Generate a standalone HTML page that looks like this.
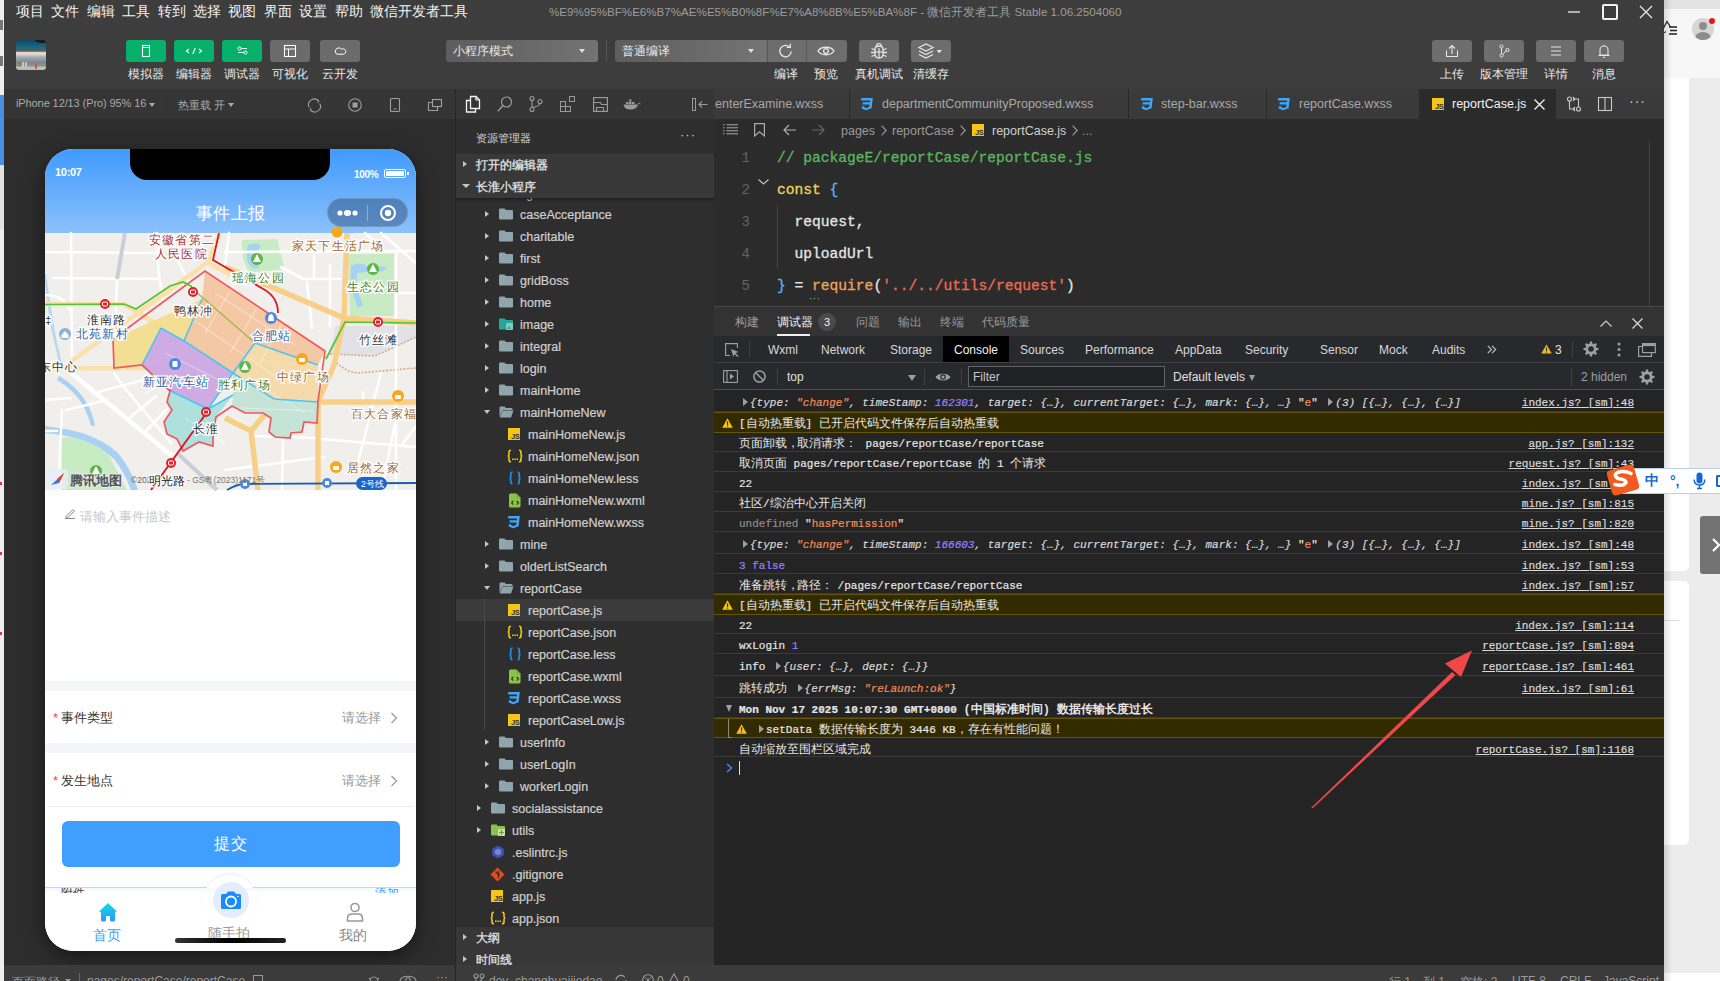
<!DOCTYPE html>
<html><head><meta charset="utf-8">
<style>
*{box-sizing:border-box;margin:0;padding:0}
html,body{width:1720px;height:981px;overflow:hidden;background:#ececec;font-family:"Liberation Sans",sans-serif;}
.a{position:absolute}
.nw{white-space:nowrap}
svg{display:block;overflow:visible}
#win{position:absolute;left:4px;top:0;width:1660px;height:981px;background:#3d3d3d;overflow:hidden}
#menu{position:absolute;left:12px;top:3px;font-size:14px;color:#f2f2f2;white-space:nowrap}
#menu span{margin-right:7.4px}
#title{position:absolute;left:545px;top:5px;font-size:11.6px;color:#9c9c9c;white-space:nowrap}
.tbtn{position:absolute;top:40px;width:40px;height:22px;border-radius:3px;background:#07b06a}
.tbtn.g{background:#6b6b6b}
.tbtn svg{position:absolute;left:0;top:0}
.tlbl{position:absolute;top:66px;font-size:12px;color:#e8e8e8;white-space:nowrap;text-align:center;width:80px;margin-left:-40px}
.dd{position:absolute;top:40px;height:22px;border-radius:3px;background:linear-gradient(90deg,#5d5d5d,#737373);font-size:12px;color:#e8e8e8;line-height:22px;padding-left:7px;white-space:nowrap}
.tri{position:absolute;width:0;height:0;border-left:3.5px solid transparent;border-right:3.5px solid transparent;border-top:4px solid #e0e0e0}
/* sim */
#sim{position:absolute;left:0;top:89px;width:451px;height:876px;background:#2d2d2d;overflow:hidden}
#simbar{position:absolute;left:0;top:0;width:451px;height:30px;background:#353535;font-size:12px;color:#a9a9a9}
#phone{position:absolute;left:41px;top:60px;width:371px;height:802px;border-radius:28px;background:#fff;overflow:hidden;box-shadow:0 6px 20px rgba(0,0,0,.5)}
/* explorer */
#exp{position:absolute;left:451px;top:89px;width:259px;height:876px;background:#2e2e2e;overflow:hidden}
.tr{position:absolute;left:0;width:259px;height:22px}
.tt{position:absolute;top:4.5px;font-size:12.5px;color:#d0d0d0;white-space:nowrap;-webkit-text-stroke:0.2px}
.trr{position:absolute;width:0;height:0;border-top:3.5px solid transparent;border-bottom:3.5px solid transparent;border-left:4px solid #c5c5c5}
.ijs{position:absolute;top:5px;width:12px;height:12px;background:#f5c518}
.ijs span{position:absolute;right:0.5px;bottom:-1px;font-size:7px;font-weight:bold;color:#3a3a3a;letter-spacing:-0.3px}
.ijson{position:absolute;top:3px;font-size:12px;color:#f5c518;letter-spacing:-0.5px;white-space:nowrap}
.iless{position:absolute;top:2px;font-size:13px;color:#1e88e5;letter-spacing:-1px;white-space:nowrap}
#ed{position:absolute;left:710px;top:89px;width:950px;height:876px;background:#2b2b2b;overflow:hidden}
.code{position:absolute;left:0;height:32px;line-height:32px;font-family:"Liberation Mono",monospace;font-size:14.6px;-webkit-text-stroke:0.3px;white-space:pre;color:#e6e6e6;padding-left:63px}
.code .ln{position:absolute;left:24px;width:12px;text-align:right;color:#636363;font-size:14px;-webkit-text-stroke:0}
.ptab{position:absolute;top:226px;font-size:11.5px;white-space:nowrap}
.dtab{position:absolute;top:254px;font-size:12px;color:#d8d8d8;white-space:nowrap}
.crow{position:absolute;left:0;width:950px;border-bottom:1px solid #3a3a3a}
.cw{background:#332b00;border-top:1px solid #665500;border-bottom:1px solid #665500}
.ct{position:absolute;font-family:"Liberation Mono",monospace;font-size:11px;-webkit-text-stroke:0.2px;color:#e6e6e6;white-space:pre;line-height:14px}
.cj{font-size:12px;-webkit-text-stroke:0}
.cp{margin-right:-2px}
.ob{font-style:italic;color:#d8d8d8}
.st{color:#f28b54}
.nu{color:#9980ff}
.ctri{display:inline-block;width:0;height:0;border-top:4px solid transparent;border-bottom:4px solid transparent;border-left:5px solid #9aa0a6;margin:0 2px 0 4px;vertical-align:0px}
.csrc{position:absolute;right:30px;font-family:"Liberation Mono",monospace;font-size:11px;-webkit-text-stroke:0.2px;color:#d8d8d8;text-decoration:underline;white-space:pre;line-height:14px}
#status{position:absolute;left:0;top:965px;width:1660px;height:16px;background:#3b3b3b;overflow:hidden}
</style></head><body>
<div id="win">
  <div id="menu"><span>项目</span><span>文件</span><span>编辑</span><span>工具</span><span>转到</span><span>选择</span><span>视图</span><span>界面</span><span>设置</span><span>帮助</span><span>微信开发者工具</span></div>
  <div id="title">%E9%95%BF%E6%B7%AE%E5%B0%8F%E7%A8%8B%E5%BA%8F - 微信开发者工具 Stable 1.06.2504060</div>
  <!-- window controls -->
  <div class="a" style="left:1564px;top:11px;width:12px;height:2px;background:#b0b0b0"></div>
  <div class="a" style="left:1598px;top:4px;width:16px;height:16px;border:2px solid #f0f0f0;border-radius:2px"></div>
  <svg class="a" style="left:1636px;top:6px" width="12" height="12"><path d="M0 0L12 12M12 0L0 12" stroke="#e8e8e8" stroke-width="1.3"/></svg>
  <!-- avatar -->
  <div class="a" style="left:12px;top:40px;width:30px;height:30px;border-radius:3px;overflow:hidden;background:linear-gradient(180deg,#0f4763 0%,#1d6f8a 30%,#5f5445 34%,#7d6f62 38%,#e6dfd0 42%,#d4d6d8 48%,#a4a9b0 58%,#7f858e 75%,#8d918e 86%,#c2c3bf 92%,#b4b6b2 100%)">
    <div class="a" style="left:19px;top:-3px;width:14px;height:6px;border-radius:50%;background:#1a1a1a"></div>
    <div class="a" style="left:2px;top:22px;width:3px;height:4px;background:#8a7a5a;opacity:.7"></div>
    <div class="a" style="left:6px;top:22px;width:2px;height:5px;background:#e0e0d0;opacity:.7"></div>
    <div class="a" style="left:9px;top:22px;width:2px;height:5px;background:#e0e0d0;opacity:.7"></div>
    <div class="a" style="left:19px;top:24px;width:2px;height:5px;background:#c05040;opacity:.8"></div>
  </div>
  <!-- toolbar buttons -->
  <div class="tbtn" style="left:122px"><svg width="40" height="22"><rect x="16.5" y="5.5" width="7" height="11" fill="none" stroke="#fff" stroke-width="1.1"/><line x1="17" y1="7.5" x2="23" y2="7.5" stroke="#fff" stroke-width="1"/></svg></div>
  <div class="tbtn" style="left:170px"><svg width="40" height="22"><path d="M15 9L12.5 11L15 13M25 9L27.5 11L25 13M21.3 8L18.7 14" fill="none" stroke="#fff" stroke-width="1.1"/></svg></div>
  <div class="tbtn" style="left:218px"><svg width="40" height="22"><line x1="16" y1="8.5" x2="25" y2="8.5" stroke="#fff" stroke-width="1"/><line x1="16" y1="12.5" x2="25" y2="12.5" stroke="#fff" stroke-width="1"/><circle cx="17.5" cy="8.5" r="1.6" fill="#07b06a" stroke="#fff" stroke-width="1"/><circle cx="23.5" cy="12.5" r="1.6" fill="#07b06a" stroke="#fff" stroke-width="1"/></svg></div>
  <div class="tbtn g" style="left:266px"><svg width="40" height="22"><rect x="14.5" y="5.5" width="11" height="11" fill="none" stroke="#fff" stroke-width="1.1"/><line x1="14.5" y1="9" x2="25.5" y2="9" stroke="#fff" stroke-width="1"/><line x1="18.5" y1="9" x2="18.5" y2="16.5" stroke="#fff" stroke-width="1"/></svg></div>
  <div class="tbtn g" style="left:316px"><svg width="40" height="22"><path d="M16 13.5a3.3 3.3 0 1 1 5.5-4.2a2.7 2.7 0 1 1 1.8 4.9H18a2.3 2.3 0 0 1-2-0.7z" fill="none" stroke="#fff" stroke-width="1"/></svg></div>
  <div class="tlbl" style="left:142px">模拟器</div>
  <div class="tlbl" style="left:190px">编辑器</div>
  <div class="tlbl" style="left:238px">调试器</div>
  <div class="tlbl" style="left:286px">可视化</div>
  <div class="tlbl" style="left:336px">云开发</div>
  <!-- mode dropdowns -->
  <div class="dd" style="left:442px;width:152px">小程序模式<div class="tri" style="left:133px;top:9px"></div></div>
  <div class="a" style="left:602px;top:40px;width:1px;height:21px;background:#555"></div>
  <div class="dd" style="left:611px;width:232px;background:linear-gradient(90deg,#5d5d5d,#747474 65%,#6d6d6d 65.2%,#6d6d6d)">普通编译<div class="tri" style="left:133px;top:9px"></div>
    <div class="a" style="left:152px;top:0;width:1px;height:22px;background:#5a5a5a"></div>
    <div class="a" style="left:191px;top:0;width:1px;height:22px;background:#5a5a5a"></div>
    <svg class="a" style="left:163px;top:3px" width="16" height="16"><path d="M13.2 8.5a5.7 5.7 0 1 1-1.9-4.6" fill="none" stroke="#e6e6e6" stroke-width="1.3"/><path d="M12.3 0.8v3.6h-3.6" fill="none" stroke="#e6e6e6" stroke-width="1.3"/></svg>
    <svg class="a" style="left:202px;top:5px" width="18" height="12"><path d="M1 6C4 1 14 1 17 6C14 11 4 11 1 6z" fill="none" stroke="#e6e6e6" stroke-width="1.3"/><circle cx="9" cy="6" r="2.4" fill="none" stroke="#e6e6e6" stroke-width="1.3"/></svg>
  </div>
  <div class="tbtn g" style="left:855px;background:#6d6d6d"><svg width="40" height="22"><path d="M16 9.5Q16 6 20 6Q24 6 24 9.5V14Q24 18 20 18Q16 18 16 14z" fill="none" stroke="#e6e6e6" stroke-width="1.3"/><path d="M17.5 6.5Q17.5 3.5 20 3.5Q22.5 3.5 22.5 6.5M20 8V18M16 12H24" fill="none" stroke="#e6e6e6" stroke-width="1.2"/><path d="M12.5 8.5L16 10M27.5 8.5L24 10M12 12.5H16M28 12.5H24M12.5 16.5L16 15M27.5 16.5L24 15" fill="none" stroke="#e6e6e6" stroke-width="1.3"/></svg></div>
  <div class="tbtn g" style="left:907px;background:#6d6d6d"><svg width="40" height="22"><path d="M8 7.5l7-3.5l7 3.5l-7 3.5z" fill="none" stroke="#e6e6e6" stroke-width="1.2"/><path d="M8 11l7 3.5l7-3.5M8 14.5l7 3.5l7-3.5" fill="none" stroke="#e6e6e6" stroke-width="1.2"/><path d="M25.5 10h5.5l-2.75 3.2z" fill="#e6e6e6"/></svg></div>
  <div class="tlbl" style="left:782px">编译</div>
  <div class="tlbl" style="left:822px">预览</div>
  <div class="tlbl" style="left:875px">真机调试</div>
  <div class="tlbl" style="left:927px">清缓存</div>
  <!-- right toolbar -->
  <div class="tbtn g" style="left:1428px;background:#6d6d6d"><svg width="40" height="22"><path d="M14.5 10.5v6h11v-6M20 14V5.5M17 8.5l3-3l3 3" fill="none" stroke="#e6e6e6" stroke-width="1.1"/></svg></div>
  <div class="tbtn g" style="left:1480px;background:#6d6d6d"><svg width="40" height="22"><circle cx="17.5" cy="6.5" r="1.6" fill="none" stroke="#e6e6e6" stroke-width="1"/><circle cx="17.5" cy="15.5" r="1.6" fill="none" stroke="#e6e6e6" stroke-width="1"/><circle cx="23.5" cy="10" r="1.6" fill="none" stroke="#e6e6e6" stroke-width="1"/><path d="M17.5 8.1v5.8M22.1 10.8l-3.3 3.6" fill="none" stroke="#e6e6e6" stroke-width="1"/></svg></div>
  <div class="tbtn g" style="left:1532px;background:#6d6d6d"><svg width="40" height="22"><path d="M15 7h10M15 11h10M15 15h10" stroke="#e6e6e6" stroke-width="1.1"/></svg></div>
  <div class="tbtn g" style="left:1580px;background:#6d6d6d"><svg width="40" height="22"><path d="M16 15V10a4 4 0 0 1 8 0v5zM14.5 15.5h11M19 17.2h2M20 4.8v1.2" fill="none" stroke="#e6e6e6" stroke-width="1.1"/></svg></div>
  <div class="tlbl" style="left:1448px">上传</div>
  <div class="tlbl" style="left:1500px">版本管理</div>
  <div class="tlbl" style="left:1552px">详情</div>
  <div class="tlbl" style="left:1600px">消息</div>

  <!-- SIM -->
  <div id="sim">
    <div id="simbar">
      <div class="a nw" style="left:12px;top:8px;font-size:11px;letter-spacing:-0.1px">iPhone 12/13 (Pro) 95% 16</div>
      <div class="tri" style="left:145px;top:14px;border-top-color:#a9a9a9"></div>
      <div class="a" style="left:162px;top:0;width:1px;height:30px;background:#333"></div>
      <div class="a nw" style="left:174px;top:8.5px;font-size:11.4px">热重载 开</div>
      <div class="tri" style="left:224px;top:14px;border-top-color:#a9a9a9"></div>
      <div class="a" style="left:241px;top:0;width:1px;height:30px;background:#333"></div>
      <svg class="a" style="left:303px;top:9px" width="15" height="15"><path d="M2.2 9.5A5.8 5.8 0 0 1 11.5 2.8" fill="none" stroke="#a0a0a0" stroke-width="1.1"/><path d="M12.8 5.5A5.8 5.8 0 0 1 3.5 12.2" fill="none" stroke="#a0a0a0" stroke-width="1.1"/><path d="M9.8 1.5L12 2.9L10.8 5" fill="none" stroke="#a0a0a0" stroke-width="1"/><path d="M5.2 13.5L3 12.1L4.2 10" fill="none" stroke="#a0a0a0" stroke-width="1"/></svg>
      <svg class="a" style="left:344px;top:9px" width="14" height="14"><circle cx="7" cy="7" r="6.3" fill="none" stroke="#a0a0a0" stroke-width="1.1"/><rect x="4.5" y="4.5" width="5" height="5" fill="#a0a0a0"/></svg>
      <svg class="a" style="left:386px;top:9px" width="10" height="14"><rect x="0.5" y="0.5" width="9" height="13" rx="1" fill="none" stroke="#a0a0a0" stroke-width="1.1"/><line x1="3.5" y1="11" x2="6.5" y2="11" stroke="#a0a0a0"/></svg>
      <svg class="a" style="left:424px;top:10px" width="14" height="12"><rect x="4.5" y="0.5" width="9" height="7" fill="none" stroke="#a0a0a0" stroke-width="1.1"/><path d="M4.5 3.5H0.5v8h9v-4" fill="none" stroke="#a0a0a0" stroke-width="1.1"/></svg>
    </div>
    <div id="phone">
      <div class="a" style="left:0;top:0;width:371px;height:84px;background:linear-gradient(180deg,#3f9bff 0%,#62abfb 45%,#8cc1fb 100%)"></div>
      <div class="a" style="left:85px;top:0;width:200px;height:31px;background:#000;border-radius:0 0 17px 17px"></div>
      <div class="a nw" style="left:10px;top:17px;font-size:11px;font-weight:bold;color:#fff;letter-spacing:-0.3px">10:07</div>
      <div class="a nw" style="left:309px;top:19.5px;font-size:10px;font-weight:bold;color:#fff;letter-spacing:-0.3px">100%</div>
      <div class="a" style="left:339px;top:20px;width:22px;height:9px;border:1px solid #fff;border-radius:2px;padding:1px"><div style="width:100%;height:100%;background:#fff;border-radius:1px"></div></div>
      <div class="a" style="left:362px;top:23px;width:1.5px;height:3px;background:#fff"></div>
      <div class="a nw" style="left:151px;top:53px;font-size:17px;color:#fff;letter-spacing:0.3px">事件上报</div>
      <div class="a" style="left:282px;top:49px;width:81px;height:29px;border-radius:15px;background:rgba(40,70,110,.45);border:1px solid rgba(255,255,255,.15)"></div>
      <div class="a" style="left:322px;top:56px;width:1px;height:16px;background:rgba(255,255,255,.35)"></div>
      <svg class="a" style="left:290px;top:58px" width="26" height="12"><circle cx="5" cy="6" r="2.6" fill="#fff"/><ellipse cx="12.5" cy="6" rx="3.6" ry="3" fill="#fff"/><circle cx="20" cy="6" r="2.6" fill="#fff"/></svg>
      <svg class="a" style="left:334px;top:55px" width="18" height="18"><circle cx="9" cy="9" r="7" fill="none" stroke="#fff" stroke-width="2"/><circle cx="9" cy="9" r="3.2" fill="#fff"/></svg>
      <!-- MAP -->
      <svg class="a" style="left:0;top:84px" width="371" height="257" viewBox="0 0 371 257">
        <rect width="371" height="257" fill="#f1efeb"/>
        <!-- parks -->
        <path d="M197 7 L232 6 L240 36 L205 40 Q196 30 197 7z" fill="#c9ebc4"/>
        <path d="M203 12 Q214 8 216 14 Q210 20 212 28 Q218 34 210 36 Q198 32 203 12z" fill="#a6d3f3"/>
        <path d="M303 21 L349 21 L349 83 L305 83z" fill="#c9ebc4"/>
        <path d="M306 33 Q315 28 322 33 L342 34 Q340 40 330 38 L312 40 Q310 55 318 72 L313 75 Q304 56 306 33z" fill="#a6d3f3"/>
        <path d="M17 205 Q40 200 60 215 L82 257 L17 257z" fill="#c9ebc4"/>
        <!-- gray railway area -->
        <path d="M290 93 L371 93 L371 105 L330 123 L285 121z" fill="#e2e2e6"/>
        <path d="M285 121 L330 123 L371 104" fill="none" stroke="#dba98a" stroke-width="1.6" stroke-dasharray="2 1.5"/>
        <path d="M289 127 Q300 139 313 140 L371 135" fill="none" stroke="#dba98a" stroke-width="1.6" stroke-dasharray="2 1.5"/>
        <!-- rivers -->
        <path d="M0 193 Q25 196 40 201 Q60 208 73 220 Q86 236 93 257 L86 257 Q79 238 68 225 Q55 213 38 207 Q22 202 0 200z" fill="#a9d1f3"/>
        <path d="M14 143 Q30 152 40 167 Q48 180 50 193 L46 193 Q43 181 36 169 Q27 156 12 147z" fill="#a9d1f3"/>
        <path d="M1 40 Q8 90 12 110 Q16 125 17 132 L14 132 Q12 120 9 108 Q4 90 -1 42z" fill="#b9d9f3"/>
        <!-- minor white roads -->
        <g stroke="#ffffff" stroke-width="2.6" fill="none" stroke-linecap="round">
          <path d="M0 19 L110 20"/><path d="M180 19 L371 18"/><path d="M8 45 L112 46"/>
          <path d="M26 0 L27 131"/><path d="M72 45 L69 131"/><path d="M112 0 Q112 40 118 66"/>
          <path d="M132 26 L146 53"/><path d="M184 0 L180 32"/><path d="M236 34 L258 46 L295 46"/>
          <path d="M269 20 L269 46"/><path d="M285 32 L285 93"/><path d="M262 50 L267 95"/>
          <path d="M351 21 L351 257"/><path d="M351 60 L371 60"/><path d="M0 62 Q20 62 26 80"/>
          <path d="M26 140 L126 222" stroke-width="4.5"/>
          <path d="M69 140 L78 153 L126 210"/><path d="M53 159 L106 145"/><path d="M21 177 L62 167"/>
          <path d="M0 167 L26 165"/><path d="M17 177 L13 257"/><path d="M82 187 L111 163"/>
          <path d="M99 200 L122 176"/><path d="M0 198 L12 198"/>
          <path d="M209 203 L270 205"/><path d="M277 206 L371 214"/><path d="M312 233 L336 140"/>
          <path d="M339 246 L352 180"/><path d="M356 213 L371 193"/><path d="M238 205 L237 257"/>
          <path d="M180 237 L279 224"/><path d="M318 159 L318 166"/><path d="M210 128 L273 132"/>
          <path d="M336 0 L371 30"/><path d="M320 0 L335 14"/>
        </g>
        <!-- roads inside districts (pale) -->
        <g stroke="#ffffff" stroke-opacity=".45" stroke-width="1.5" fill="none">
          <path d="M170 60 L250 112"/><path d="M150 88 L240 150"/><path d="M190 50 L160 100"/><path d="M215 70 L185 120"/>
          <path d="M240 85 L215 130"/><path d="M120 120 L180 150"/><path d="M140 185 L180 210"/><path d="M210 150 L260 180"/>
          <path d="M90 110 L68 132"/><path d="M100 160 L160 130"/>
        </g>
        <!-- grey railway line -->
        <path d="M132 220 L172 257" stroke="#c9ced8" stroke-width="4" fill="none"/>
        <path d="M80 0 L72 46" stroke="#c9ced8" stroke-width="4" fill="none"/>
        <!-- major yellow roads -->
        <g stroke="#f7cf87" stroke-width="5.5" fill="none" stroke-linejoin="round">
          <path d="M180 34 L299 85 L371 90"/>
          <path d="M302 0 L299 85 L289 132 L273 169 L273 257"/>
          <path d="M273 169 L371 169"/>
          <path d="M180 185 L206 198 L213 257"/><path d="M206 198 L221 180"/>
        </g>
        <g stroke="#fbe1a9" stroke-width="4.5" fill="none" stroke-linejoin="round">
          <path d="M0 135.5 L115 135 L126 140 L160 182"/>
          <path d="M24 130 L163 29 L175 0"/>
          <path d="M0 71 L79 71 L115 93"/>
          <path d="M164 30 L200 50"/>
        </g>
        <!-- districts -->
        <g opacity=".92">
        <path d="M68 106 L157 66 L139 108 L116 95 L97 132 L69 135z" fill="#f4dd8c"/>
        <path d="M160 38 L280 118 L273 132 L210 110 L188 140 L139 108 L157 66z" fill="#f6c5a0"/>
        <path d="M210 110 L273 132 L273 169 L229 166 L188 140z" fill="#f6d9a6"/>
        <path d="M116 95 L139 108 L188 140 L163 176 L124 157 L97 132z" fill="#cca6e3"/>
        <path d="M124 157 L126 155 L123 165 L122 169 L127 177 L119 189 L122 201 L132 206 L138 218 L154 209 L168 213 L168 201 L171 184 L188 162 L163 176z" fill="#a9e0dd"/>
        <path d="M188 140 L229 166 L273 169 L272 190 L259 189 L257 199 L246 200 L245 205 L230 204 L224 199 L226 185 L218 180 L200 180 L187 173 L188 162z" fill="#c2e3d6"/>
        </g>
        <g stroke="#ffffff" stroke-opacity=".35" stroke-width="1.3" fill="none">
          <path d="M170 60 L250 112"/><path d="M150 88 L240 150"/><path d="M190 50 L160 100"/><path d="M215 70 L185 120"/>
          <path d="M240 85 L215 130"/><path d="M120 120 L180 150"/><path d="M140 185 L180 210"/><path d="M210 150 L260 180"/>
          <path d="M195 175 L270 178"/>
        </g>
        <g stroke="#4ac6f0" stroke-width="1.6" fill="none">
          <path d="M157 66 L139 108 L188 140 L229 166 L273 169"/>
          <path d="M210 110 L188 140 L163 176"/>
          <path d="M116 95 L139 108"/><path d="M116 95 L97 132 L124 157 L163 176 L188 162"/>
          <path d="M210 110 L273 132"/>
        </g>
        <path d="M68 106 L160 38 L280 118 L273 168 L272 190 L259 189 L257 199 L246 200 L245 205 L230 204 L224 199 L226 185 L218 180 L200 180 L187 173 L171 184 L168 201 L168 213 L154 209 L138 218 L132 206 L122 201 L119 189 L127 177 L122 169 L123 165 L126 155 L124 157 L97 132 L69 135z" fill="none" stroke="#ee5a5e" stroke-width="1.7"/>
        <!-- subway lines -->
        <path d="M0 71.5 L79 71 L91 76 L125 53 L138 49 L146 53 L149 58" fill="none" stroke="#52c535" stroke-width="1.7"/>
        <path d="M150 58 L210 110" fill="none" stroke="#9db848" stroke-width="1.3"/>
        <path d="M281 126 L300 89 L371 90" fill="none" stroke="#52c535" stroke-width="1.7"/>
        <path d="M174 0 L168 27 L220 57 Q233 65 233 80" fill="none" stroke="#d21d2a" stroke-width="1.8"/>
        <path d="M160 182 L106 257" fill="none" stroke="#d21d2a" stroke-width="2"/>
        <path d="M182 257 Q192 251 200 251 L371 250" fill="none" stroke="#1a5cb3" stroke-width="1.8"/>
        <!-- station icons -->
        <g fill="#d8242e"><circle cx="60" cy="71" r="5"/><circle cx="148" cy="59" r="5"/><circle cx="333" cy="89" r="5"/><circle cx="161" cy="179" r="5"/><circle cx="126" cy="230" r="5"/></g>
        <g fill="none" stroke="#fff" stroke-width="1"><rect x="57.5" y="69" width="5" height="4" rx="1"/><rect x="145.5" y="57" width="5" height="4" rx="1"/><rect x="330.5" y="87" width="5" height="4" rx="1"/><rect x="158.5" y="177" width="5" height="4" rx="1"/><rect x="123.5" y="228" width="5" height="4" rx="1"/></g>
        <g fill="#4a88e6"><circle cx="226" cy="85" r="6"/><circle cx="130" cy="131" r="6"/><circle cx="20" cy="101" r="6" fill="#8db0da"/><circle cx="200" cy="251" r="5"/><circle cx="282" cy="250" r="5"/></g>
        <g fill="#fff"><path d="M223 88 Q223 81 226 81 Q229 81 229 88z"/><rect x="127.5" y="128" width="5" height="6" rx="1"/><path d="M16.5 102 L20 98 L23.5 102 V105 H16.5z"/><rect x="198" y="249" width="4" height="4"/><rect x="280" y="248" width="4" height="4"/></g>
        <g fill="#5bb54a"><circle cx="212" cy="26" r="6"/><circle cx="328" cy="36" r="6"/><circle cx="200" cy="134" r="6"/><circle cx="51" cy="238" r="6"/></g>
        <g fill="#fff"><path d="M212 21 L216 29 H208z"/><path d="M328 31 L332 39 H324z"/><path d="M200 129 L204 137 H196z"/><path d="M51 233 L55 241 H47z"/></g>
        <g fill="#f5a81c"><circle cx="257" cy="126" r="6"/><circle cx="353" cy="163" r="6"/><circle cx="291" cy="234" r="6"/><circle cx="292" cy="-1" r="5.5"/></g>
        <g fill="#fff"><rect x="254" y="125" width="6" height="4" rx="1"/><rect x="350" y="162" width="6" height="4" rx="1"/><rect x="288" y="233" width="6" height="4" rx="1"/></g>
        <!-- labels -->
        <g font-family="Liberation Sans,sans-serif" font-size="11.5" stroke="#fff" stroke-width="2.6" paint-order="stroke" letter-spacing="1.2" font-weight="bold">
          <text x="104" y="11" fill="#a8333a" font-weight="normal">安徽省第二</text>
          <text x="110" y="25" fill="#a8333a" font-weight="normal">人民医院</text>
          <text x="247" y="17" fill="#9c6a2e" font-weight="normal">家天下生活广场</text>
          <text x="187" y="49" fill="#3f7f2d" font-weight="normal">瑶海公园</text>
          <text x="302" y="58" fill="#3f7f2d" font-weight="normal">生态公园</text>
          <text x="129" y="82" fill="#333" font-weight="normal">鸭林冲</text>
          <text x="42" y="91" fill="#333" font-weight="normal">淮南路</text>
          <text x="31" y="105" fill="#2d62a8" font-weight="normal">北苑新村</text>
          <text x="207" y="107" fill="#2d62a8" font-weight="normal">合肥站</text>
          <text x="314" y="111" fill="#333" font-weight="normal">竹丝滩</text>
          <text x="-6" y="138" fill="#333" font-weight="normal">东中心</text>
          <text x="0" y="91" fill="#333" font-weight="normal">‡</text>
          <text x="98" y="153" fill="#2d62a8" font-weight="normal">新亚汽车站</text>
          <text x="173" y="156" fill="#3f7f2d" font-weight="normal">胜利广场</text>
          <text x="232" y="148" fill="#9c6a2e" font-weight="normal">中绿广场</text>
          <text x="306" y="185" fill="#9c6a2e" font-weight="normal">百大合家福</text>
          <text x="148" y="200" fill="#333" font-weight="normal">长淮</text>
          <text x="302" y="239" fill="#9c6a2e" font-weight="normal">居然之家</text>
        </g>
        <g font-family="Liberation Sans,sans-serif">
          <rect x="3" y="236" width="20" height="20" rx="3" fill="#e6edf7" opacity=".85"/>
          <path d="M6 252 L19 240 L14 250z" fill="#2f7de0"/><path d="M19 240 L14 250 L12 246z" fill="#e8412c"/>
          <text x="25" y="252" font-size="13" font-weight="bold" fill="#555" stroke="#e8e8e8" stroke-width="2" paint-order="stroke">腾讯地图</text>
          <text x="86" y="250" font-size="8.5" fill="#666">©2023</text>
          <text x="104" y="252" font-size="12" fill="#222" stroke="#fff" stroke-width="2" paint-order="stroke">明光路</text>
          <text x="142" y="250" font-size="8.5" fill="#777">- GS粤(2023)1171号</text>
          <rect x="311" y="244" width="31" height="13" rx="6.5" fill="#1766c9"/>
          <text x="316" y="254" font-size="8.5" fill="#fff">2号线</text>
        </g>
      </svg>
      <!-- form -->
      <svg class="a" style="left:19px;top:358px" width="12" height="12"><path d="M2 9.5L9 2.5L10.5 4L3.5 11H2z" fill="none" stroke="#888" stroke-width="1"/><line x1="1" y1="11.5" x2="11" y2="11.5" stroke="#888" stroke-width="1"/></svg>
      <div class="a nw" style="left:35px;top:359px;font-size:13px;color:#c8c8c8">请输入事件描述</div>
      <div class="a" style="left:0;top:532px;width:371px;height:10px;background:#f4f5f8"></div>
      <div class="a nw" style="left:8px;top:561px;font-size:13px;color:#f5414e">*</div>
      <div class="a nw" style="left:16px;top:560px;font-size:13px;color:#333">事件类型</div>
      <div class="a nw" style="left:297px;top:560px;font-size:13px;color:#999">请选择</div>
      <svg class="a" style="left:345px;top:563px" width="8" height="12"><path d="M1.5 1L6.5 6L1.5 11" fill="none" stroke="#999" stroke-width="1.2"/></svg>
      <div class="a" style="left:0;top:594px;width:371px;height:10px;background:#f4f5f8"></div>
      <div class="a nw" style="left:8px;top:624px;font-size:13px;color:#f5414e">*</div>
      <div class="a nw" style="left:16px;top:623px;font-size:13px;color:#333">发生地点</div>
      <div class="a nw" style="left:297px;top:623px;font-size:13px;color:#999">请选择</div>
      <svg class="a" style="left:345px;top:626px" width="8" height="12"><path d="M1.5 1L6.5 6L1.5 11" fill="none" stroke="#999" stroke-width="1.2"/></svg>
      <div class="a" style="left:2px;top:657px;width:367px;height:1px;background:#eee"></div>
      <div class="a" style="left:17px;top:672px;width:338px;height:46px;border-radius:6px;background:#409eff;color:#fff;font-size:16px;text-align:center;line-height:46px;letter-spacing:1px">提交</div>
      
      
      <!-- tab bar -->
      <div class="a" style="left:0;top:738px;width:371px;height:64px;background:#fff;border-top:1px solid #bcdaf8"></div>
      <div class="a" style="left:157px;top:726px;width:56px;height:56px;border-radius:50%;background:#fff;box-shadow:0 -2px 3px rgba(0,0,0,.05)"></div>
      <div class="a" style="left:0;top:739px;width:371px;height:6px;background:linear-gradient(#f6f8fa,#fff)"></div>
      <div class="a" style="left:168px;top:733px;width:36px;height:36px;border-radius:50%;background:#e3edfd"></div>
      <svg class="a" style="left:175px;top:741px" width="22" height="20"><path d="M1 5.5Q1 4 2.5 4H6L8 1.5H14L16 4H19.5Q21 4 21 5.5V17.5Q21 19 19.5 19H2.5Q1 19 1 17.5z" fill="#1a8bff"/><circle cx="11" cy="11.5" r="5" fill="none" stroke="#fff" stroke-width="1.8"/><circle cx="18" cy="6.5" r="0.8" fill="#fff"/></svg>
      <svg class="a" style="left:53px;top:753px" width="20" height="20"><defs><linearGradient id="hg" x1="0" y1="0" x2="0" y2="1"><stop offset="0" stop-color="#12dbe6"/><stop offset="1" stop-color="#2e96f7"/></linearGradient></defs><path d="M10 1L19 9.5L17 10V18Q17 19.5 15.5 19.5H13.5Q12 19.5 12 18V14H8V18Q8 19.5 6.5 19.5H4.5Q3 19.5 3 18V10L1 9.5z" fill="url(#hg)"/></svg>
      <div class="a nw" style="left:48px;top:778px;font-size:14px;color:#4a9ff5">首页</div>
      <div class="a nw" style="left:163px;top:776px;font-size:14px;color:#999;height:14px;overflow:hidden">随手拍</div>
      <svg class="a" style="left:301px;top:753px" width="18" height="20"><circle cx="9" cy="5.5" r="4" fill="none" stroke="#999" stroke-width="1.6"/><path d="M1.5 19V16.5Q1.5 12 6 12H12Q16.5 12 16.5 16.5V19z" fill="none" stroke="#999" stroke-width="1.6"/></svg>
      <div class="a nw" style="left:294px;top:778px;font-size:14px;color:#888">我的</div>
      <div class="a" style="left:16px;top:739px;width:40px;height:5px;overflow:hidden"><div class="nw" style="margin-top:-3px;font-size:12px;color:#444">附件</div></div>
      <div class="a" style="left:330px;top:739px;width:40px;height:5px;overflow:hidden"><div class="nw" style="margin-top:-3px;font-size:12px;color:#409eff">添加</div></div>
      <div class="a" style="left:130px;top:789px;width:111px;height:5px;border-radius:3px;background:linear-gradient(90deg,#333,#000 50%,#222)"></div>
    </div>
  </div>
  <div class="a" style="left:451px;top:89px;width:1px;height:892px;background:#262626;z-index:5"></div>
  <div id="exp">
    <div class="a" style="left:0;top:0;width:259px;height:30px;background:#353535"></div>
    <!-- activity icons (page x - 455) -->
    <svg class="a" style="left:10px;top:7px" width="16" height="17"><path d="M5.5 0.5H11L14.5 4V12.5H5.5z" fill="none" stroke="#f4f4f4" stroke-width="1.3"/><path d="M11 0.5V4H14.5" fill="none" stroke="#f4f4f4" stroke-width="1.2"/><path d="M5.5 4.5H1.5V16H10.5V12.5" fill="none" stroke="#f4f4f4" stroke-width="1.3"/></svg>
    <svg class="a" style="left:42px;top:7px" width="16" height="16"><circle cx="9.5" cy="6" r="5" fill="none" stroke="#9a9a9a" stroke-width="1.2"/><path d="M6 9.5L0.8 15.2" stroke="#9a9a9a" stroke-width="1.3"/></svg>
    <svg class="a" style="left:74px;top:7px" width="14" height="16"><circle cx="3" cy="2.5" r="2" fill="none" stroke="#9a9a9a" stroke-width="1.1"/><circle cx="3" cy="13.5" r="2" fill="none" stroke="#9a9a9a" stroke-width="1.1"/><circle cx="11" cy="5.5" r="2" fill="none" stroke="#9a9a9a" stroke-width="1.1"/><path d="M3 4.5V11.5M11 7.5Q11 10 3 11.5" fill="none" stroke="#9a9a9a" stroke-width="1.1"/></svg>
    <svg class="a" style="left:105px;top:7px" width="16" height="16"><rect x="0.5" y="5.5" width="5" height="5" fill="none" stroke="#9a9a9a"/><rect x="5.5" y="10.5" width="5" height="5" fill="none" stroke="#9a9a9a"/><rect x="0.5" y="10.5" width="5" height="5" fill="none" stroke="#9a9a9a"/><rect x="9.5" y="0.5" width="5" height="5" fill="none" stroke="#9a9a9a"/></svg>
    <svg class="a" style="left:138px;top:8px" width="15" height="15"><rect x="0.6" y="0.6" width="13.8" height="13.8" fill="none" stroke="#9a9a9a" stroke-width="1.2"/><path d="M0.6 5.5H7.5L8.5 7.5H14.4M3.5 14V10.5H10.5V14" fill="none" stroke="#9a9a9a" stroke-width="1.1"/></svg>
    <svg class="a" style="left:168px;top:9px" width="18" height="12"><path d="M0.5 6.5H15Q14 11.5 7 11.5Q1.5 11.5 0.5 6.5z" fill="#9a9a9a"/><rect x="3" y="4" width="2.5" height="2" fill="#9a9a9a"/><rect x="6" y="4" width="2.5" height="2" fill="#9a9a9a"/><rect x="9" y="4" width="2.5" height="2" fill="#9a9a9a"/><rect x="6" y="1.5" width="2.5" height="2" fill="#9a9a9a"/><path d="M15 6Q16.5 4.5 17.5 6" stroke="#9a9a9a" fill="none"/></svg>
    <svg class="a" style="left:237px;top:9px" width="16" height="13"><rect x="0.5" y="0.5" width="3" height="12" fill="none" stroke="#9a9a9a"/><path d="M15.5 6.5H7M10 3.5L7 6.5L10 9.5" fill="none" stroke="#9a9a9a" stroke-width="1.1"/></svg>
    <div class="a" style="left:0;top:30px;width:259px;height:846px;background:#2e2e2e"></div>
    <div class="a nw" style="left:21px;top:41.5px;font-size:11px;color:#d4d4d4">资源管理器</div>
    <div class="a nw" style="left:225px;top:38px;font-size:13px;color:#d0d0d0;letter-spacing:1px">···</div>
    <div class="a" style="left:0;top:65px;width:259px;height:44px;background:#383838"></div>
    <div class="trr" style="left:8px;top:72px;border-left-color:#c5c5c5"></div>
    <div class="a nw" style="left:21px;top:69px;font-size:11.5px;font-weight:bold;color:#d4d4d4">打开的编辑器</div>
    <div class="tri" style="left:7px;top:95px;border-top-color:#c5c5c5;border-left-width:4px;border-right-width:4px;border-top-width:4.5px"></div>
    <div class="a nw" style="left:21px;top:91px;font-size:11.5px;font-weight:bold;color:#d4d4d4">长淮小程序</div>
    <div class="a" style="left:71px;top:109px;width:9px;height:3px;overflow:hidden"><div class="nw" style="margin-top:-11px;font-size:12.5px;color:#c8c8c8">g</div></div>
    <div class="a" style="left:0;top:109px;width:259px;height:4px;background:linear-gradient(rgba(0,0,0,.35),rgba(0,0,0,0))"></div>
    <div class="a" style="left:0;top:510px;width:259px;height:22px;background:#3b3b3b"></div>
    <div class="a" style="left:29px;top:510px;width:1px;height:132px;background:#4a4a4a"></div>
<div class="tr" style="top:114px"><div class="trr" style="left:30px;top:7.5px"></div><svg class="a" style="left:44px;top:5px" width="15" height="12"><path d="M0 1.5Q0 0.5 1 0.5H5.5L7 2H13Q14 2 14 3V10.5Q14 11.5 13 11.5H1Q0 11.5 0 10.5z" fill="#90a4ae"/></svg><div class="tt" style="left:65px">caseAcceptance</div></div>
<div class="tr" style="top:136px"><div class="trr" style="left:30px;top:7.5px"></div><svg class="a" style="left:44px;top:5px" width="15" height="12"><path d="M0 1.5Q0 0.5 1 0.5H5.5L7 2H13Q14 2 14 3V10.5Q14 11.5 13 11.5H1Q0 11.5 0 10.5z" fill="#90a4ae"/></svg><div class="tt" style="left:65px">charitable</div></div>
<div class="tr" style="top:158px"><div class="trr" style="left:30px;top:7.5px"></div><svg class="a" style="left:44px;top:5px" width="15" height="12"><path d="M0 1.5Q0 0.5 1 0.5H5.5L7 2H13Q14 2 14 3V10.5Q14 11.5 13 11.5H1Q0 11.5 0 10.5z" fill="#90a4ae"/></svg><div class="tt" style="left:65px">first</div></div>
<div class="tr" style="top:180px"><div class="trr" style="left:30px;top:7.5px"></div><svg class="a" style="left:44px;top:5px" width="15" height="12"><path d="M0 1.5Q0 0.5 1 0.5H5.5L7 2H13Q14 2 14 3V10.5Q14 11.5 13 11.5H1Q0 11.5 0 10.5z" fill="#90a4ae"/></svg><div class="tt" style="left:65px">gridBoss</div></div>
<div class="tr" style="top:202px"><div class="trr" style="left:30px;top:7.5px"></div><svg class="a" style="left:44px;top:5px" width="15" height="12"><path d="M0 1.5Q0 0.5 1 0.5H5.5L7 2H13Q14 2 14 3V10.5Q14 11.5 13 11.5H1Q0 11.5 0 10.5z" fill="#90a4ae"/></svg><div class="tt" style="left:65px">home</div></div>
<div class="tr" style="top:224px"><div class="trr" style="left:30px;top:7.5px"></div><svg class="a" style="left:44px;top:5px" width="15" height="12"><path d="M0 1.5Q0 0.5 1 0.5H5.5L7 2H13Q14 2 14 3V10.5Q14 11.5 13 11.5H1Q0 11.5 0 10.5z" fill="#26a69a"/><rect x="7" y="5" width="7" height="7" rx="1" fill="#80cbc4"/><path d="M8 11l2-3l2 3z" fill="#26a69a"/></svg><div class="tt" style="left:65px">image</div></div>
<div class="tr" style="top:246px"><div class="trr" style="left:30px;top:7.5px"></div><svg class="a" style="left:44px;top:5px" width="15" height="12"><path d="M0 1.5Q0 0.5 1 0.5H5.5L7 2H13Q14 2 14 3V10.5Q14 11.5 13 11.5H1Q0 11.5 0 10.5z" fill="#90a4ae"/></svg><div class="tt" style="left:65px">integral</div></div>
<div class="tr" style="top:268px"><div class="trr" style="left:30px;top:7.5px"></div><svg class="a" style="left:44px;top:5px" width="15" height="12"><path d="M0 1.5Q0 0.5 1 0.5H5.5L7 2H13Q14 2 14 3V10.5Q14 11.5 13 11.5H1Q0 11.5 0 10.5z" fill="#90a4ae"/></svg><div class="tt" style="left:65px">login</div></div>
<div class="tr" style="top:290px"><div class="trr" style="left:30px;top:7.5px"></div><svg class="a" style="left:44px;top:5px" width="15" height="12"><path d="M0 1.5Q0 0.5 1 0.5H5.5L7 2H13Q14 2 14 3V10.5Q14 11.5 13 11.5H1Q0 11.5 0 10.5z" fill="#90a4ae"/></svg><div class="tt" style="left:65px">mainHome</div></div>
<div class="tr" style="top:312px"><div class="tri" style="left:29px;top:9px;border-top-color:#c5c5c5"></div><svg class="a" style="left:44px;top:5px" width="15" height="12"><path d="M0.5 1.5Q0.5 0.5 1.5 0.5H5.5L7 2H12.5Q13.5 2 13.5 3V4H3.5L0.5 11z" fill="#90a4ae"/><path d="M3.5 4.5H14.5L12 11.5H0.8z" fill="#90a4ae"/></svg><div class="tt" style="left:65px">mainHomeNew</div></div>
<div class="tr" style="top:334px"><svg class="a" style="left:53px;top:5px" width="12" height="12"><rect width="12" height="12" fill="#f5c518"/><text x="11.3" y="11" text-anchor="end" font-family="Liberation Sans,sans-serif" font-size="7.5" font-weight="bold" fill="#333" letter-spacing="-0.4">JS</text></svg><div class="tt" style="left:73px">mainHomeNew.js</div></div>
<div class="tr" style="top:356px"><svg class="a" style="left:52px;top:4px" width="16" height="14"><path d="M4 1.2Q2 1.2 2 3V5.3Q2 6.8 0.8 7Q2 7.2 2 8.7V11Q2 12.8 4 12.8M12 1.2Q14 1.2 14 3V5.3Q14 6.8 15.2 7Q14 7.2 14 8.7V11Q14 12.8 12 12.8" fill="none" stroke="#f5c518" stroke-width="1.6"/><rect x="5" y="9.5" width="1.5" height="1.5" fill="#f5c518"/><rect x="7.3" y="9.5" width="1.5" height="1.5" fill="#f5c518"/><rect x="9.6" y="9.5" width="1.5" height="1.5" fill="#f5c518"/></svg><div class="tt" style="left:73px">mainHomeNew.json</div></div>
<div class="tr" style="top:378px"><svg class="a" style="left:54px;top:4px" width="12" height="14"><path d="M3.5 1.2Q1.8 1.2 1.8 3V5.3Q1.8 6.8 0.6 7Q1.8 7.2 1.8 8.7V11Q1.8 12.8 3.5 12.8M8.5 1.2Q10.2 1.2 10.2 3V5.3Q10.2 6.8 11.4 7Q10.2 7.2 10.2 8.7V11Q10.2 12.8 8.5 12.8" fill="none" stroke="#1e88e5" stroke-width="1.8"/></svg><div class="tt" style="left:73px">mainHomeNew.less</div></div>
<div class="tr" style="top:400px"><svg class="a" style="left:54px;top:3.5px" width="12" height="15"><path d="M1.5 0.5H7.5L11.5 4.5V13Q11.5 14.5 10 14.5H1.5Q0 14.5 0 13V2Q0 0.5 1.5 0.5z" fill="#8bc34a"/><path d="M7.5 0.5V4.5H11.5" fill="#5d8a2e" opacity=".5"/><path d="M4.3 8L2.6 9.8L4.3 11.6M7.7 8L9.4 9.8L7.7 11.6" fill="none" stroke="#263a14" stroke-width="1.2"/></svg><div class="tt" style="left:73px">mainHomeNew.wxml</div></div>
<div class="tr" style="top:422px"><svg class="a" style="left:52px;top:4px" width="14" height="14"><path d="M1.5 1H12.5L11.3 12L7 13.5L2.7 12z" fill="none"/><path d="M1.3 1H12.8L11.6 11.3L6.2 13.3L1.6 11.6L1.9 9.2H4.3L4.2 10.2L6.3 10.9L9.2 10L9.5 7.6H2.5L2.8 5.3H9.8L10.1 3.4H1z" fill="#42a5f5"/></svg><div class="tt" style="left:73px">mainHomeNew.wxss</div></div>
<div class="tr" style="top:444px"><div class="trr" style="left:30px;top:7.5px"></div><svg class="a" style="left:44px;top:5px" width="15" height="12"><path d="M0 1.5Q0 0.5 1 0.5H5.5L7 2H13Q14 2 14 3V10.5Q14 11.5 13 11.5H1Q0 11.5 0 10.5z" fill="#90a4ae"/></svg><div class="tt" style="left:65px">mine</div></div>
<div class="tr" style="top:466px"><div class="trr" style="left:30px;top:7.5px"></div><svg class="a" style="left:44px;top:5px" width="15" height="12"><path d="M0 1.5Q0 0.5 1 0.5H5.5L7 2H13Q14 2 14 3V10.5Q14 11.5 13 11.5H1Q0 11.5 0 10.5z" fill="#90a4ae"/></svg><div class="tt" style="left:65px">olderListSearch</div></div>
<div class="tr" style="top:488px"><div class="tri" style="left:29px;top:9px;border-top-color:#c5c5c5"></div><svg class="a" style="left:44px;top:5px" width="15" height="12"><path d="M0.5 1.5Q0.5 0.5 1.5 0.5H5.5L7 2H12.5Q13.5 2 13.5 3V4H3.5L0.5 11z" fill="#90a4ae"/><path d="M3.5 4.5H14.5L12 11.5H0.8z" fill="#90a4ae"/></svg><div class="tt" style="left:65px">reportCase</div></div>
<div class="tr" style="top:510px"><svg class="a" style="left:53px;top:5px" width="12" height="12"><rect width="12" height="12" fill="#f5c518"/><text x="11.3" y="11" text-anchor="end" font-family="Liberation Sans,sans-serif" font-size="7.5" font-weight="bold" fill="#333" letter-spacing="-0.4">JS</text></svg><div class="tt" style="left:73px">reportCase.js</div></div>
<div class="tr" style="top:532px"><svg class="a" style="left:52px;top:4px" width="16" height="14"><path d="M4 1.2Q2 1.2 2 3V5.3Q2 6.8 0.8 7Q2 7.2 2 8.7V11Q2 12.8 4 12.8M12 1.2Q14 1.2 14 3V5.3Q14 6.8 15.2 7Q14 7.2 14 8.7V11Q14 12.8 12 12.8" fill="none" stroke="#f5c518" stroke-width="1.6"/><rect x="5" y="9.5" width="1.5" height="1.5" fill="#f5c518"/><rect x="7.3" y="9.5" width="1.5" height="1.5" fill="#f5c518"/><rect x="9.6" y="9.5" width="1.5" height="1.5" fill="#f5c518"/></svg><div class="tt" style="left:73px">reportCase.json</div></div>
<div class="tr" style="top:554px"><svg class="a" style="left:54px;top:4px" width="12" height="14"><path d="M3.5 1.2Q1.8 1.2 1.8 3V5.3Q1.8 6.8 0.6 7Q1.8 7.2 1.8 8.7V11Q1.8 12.8 3.5 12.8M8.5 1.2Q10.2 1.2 10.2 3V5.3Q10.2 6.8 11.4 7Q10.2 7.2 10.2 8.7V11Q10.2 12.8 8.5 12.8" fill="none" stroke="#1e88e5" stroke-width="1.8"/></svg><div class="tt" style="left:73px">reportCase.less</div></div>
<div class="tr" style="top:576px"><svg class="a" style="left:54px;top:3.5px" width="12" height="15"><path d="M1.5 0.5H7.5L11.5 4.5V13Q11.5 14.5 10 14.5H1.5Q0 14.5 0 13V2Q0 0.5 1.5 0.5z" fill="#8bc34a"/><path d="M7.5 0.5V4.5H11.5" fill="#5d8a2e" opacity=".5"/><path d="M4.3 8L2.6 9.8L4.3 11.6M7.7 8L9.4 9.8L7.7 11.6" fill="none" stroke="#263a14" stroke-width="1.2"/></svg><div class="tt" style="left:73px">reportCase.wxml</div></div>
<div class="tr" style="top:598px"><svg class="a" style="left:52px;top:4px" width="14" height="14"><path d="M1.5 1H12.5L11.3 12L7 13.5L2.7 12z" fill="none"/><path d="M1.3 1H12.8L11.6 11.3L6.2 13.3L1.6 11.6L1.9 9.2H4.3L4.2 10.2L6.3 10.9L9.2 10L9.5 7.6H2.5L2.8 5.3H9.8L10.1 3.4H1z" fill="#42a5f5"/></svg><div class="tt" style="left:73px">reportCase.wxss</div></div>
<div class="tr" style="top:620px"><svg class="a" style="left:53px;top:5px" width="12" height="12"><rect width="12" height="12" fill="#f5c518"/><text x="11.3" y="11" text-anchor="end" font-family="Liberation Sans,sans-serif" font-size="7.5" font-weight="bold" fill="#333" letter-spacing="-0.4">JS</text></svg><div class="tt" style="left:73px">reportCaseLow.js</div></div>
<div class="tr" style="top:642px"><div class="trr" style="left:30px;top:7.5px"></div><svg class="a" style="left:44px;top:5px" width="15" height="12"><path d="M0 1.5Q0 0.5 1 0.5H5.5L7 2H13Q14 2 14 3V10.5Q14 11.5 13 11.5H1Q0 11.5 0 10.5z" fill="#90a4ae"/></svg><div class="tt" style="left:65px">userInfo</div></div>
<div class="tr" style="top:664px"><div class="trr" style="left:30px;top:7.5px"></div><svg class="a" style="left:44px;top:5px" width="15" height="12"><path d="M0 1.5Q0 0.5 1 0.5H5.5L7 2H13Q14 2 14 3V10.5Q14 11.5 13 11.5H1Q0 11.5 0 10.5z" fill="#90a4ae"/></svg><div class="tt" style="left:65px">userLogIn</div></div>
<div class="tr" style="top:686px"><div class="trr" style="left:30px;top:7.5px"></div><svg class="a" style="left:44px;top:5px" width="15" height="12"><path d="M0 1.5Q0 0.5 1 0.5H5.5L7 2H13Q14 2 14 3V10.5Q14 11.5 13 11.5H1Q0 11.5 0 10.5z" fill="#90a4ae"/></svg><div class="tt" style="left:65px">workerLogin</div></div>
<div class="tr" style="top:708px"><div class="trr" style="left:22px;top:7.5px"></div><svg class="a" style="left:36px;top:5px" width="15" height="12"><path d="M0 1.5Q0 0.5 1 0.5H5.5L7 2H13Q14 2 14 3V10.5Q14 11.5 13 11.5H1Q0 11.5 0 10.5z" fill="#90a4ae"/></svg><div class="tt" style="left:57px">socialassistance</div></div>
<div class="tr" style="top:730px"><div class="trr" style="left:22px;top:7.5px"></div><svg class="a" style="left:36px;top:5px" width="15" height="12"><path d="M0 1.5Q0 0.5 1 0.5H5.5L7 2H13Q14 2 14 3V10.5Q14 11.5 13 11.5H1Q0 11.5 0 10.5z" fill="#8bc34a"/><rect x="7" y="5" width="7" height="7" rx="1" fill="#c5e1a5"/><path d="M10.5 6v5M8 8.5h5" stroke="#689f38" stroke-width="1.2"/></svg><div class="tt" style="left:57px">utils</div></div>
<div class="tr" style="top:752px"><svg class="a" style="left:36px;top:4px" width="14" height="14"><path d="M7 0.5L12.8 3.8V10.2L7 13.5L1.2 10.2V3.8z" fill="#3f51b5"/><path d="M7 3.5L10 5.2V8.8L7 10.5L4 8.8V5.2z" fill="#7986cb"/></svg><div class="tt" style="left:57px">.eslintrc.js</div></div>
<div class="tr" style="top:774px"><svg class="a" style="left:35px;top:3.5px" width="15" height="15"><path d="M7.5 0.5L14.5 7.5L7.5 14.5L0.5 7.5z" fill="#e64a19"/><path d="M5.5 4.5L8.5 7.5V11M8.5 7.5V4" stroke="#2e2e2e" stroke-width="1.2" fill="none"/><circle cx="8.5" cy="7.5" r="1.1" fill="#2e2e2e"/></svg><div class="tt" style="left:57px">.gitignore</div></div>
<div class="tr" style="top:796px"><svg class="a" style="left:36px;top:5px" width="12" height="12"><rect width="12" height="12" fill="#f5c518"/><text x="11.3" y="11" text-anchor="end" font-family="Liberation Sans,sans-serif" font-size="7.5" font-weight="bold" fill="#333" letter-spacing="-0.4">JS</text></svg><div class="tt" style="left:57px">app.js</div></div>
<div class="tr" style="top:818px"><svg class="a" style="left:35px;top:4px" width="16" height="14"><path d="M4 1.2Q2 1.2 2 3V5.3Q2 6.8 0.8 7Q2 7.2 2 8.7V11Q2 12.8 4 12.8M12 1.2Q14 1.2 14 3V5.3Q14 6.8 15.2 7Q14 7.2 14 8.7V11Q14 12.8 12 12.8" fill="none" stroke="#f5c518" stroke-width="1.6"/><rect x="5" y="9.5" width="1.5" height="1.5" fill="#f5c518"/><rect x="7.3" y="9.5" width="1.5" height="1.5" fill="#f5c518"/><rect x="9.6" y="9.5" width="1.5" height="1.5" fill="#f5c518"/></svg><div class="tt" style="left:57px">app.json</div></div>
    <div class="a" style="left:0;top:838px;width:259px;height:38px;background:#373737"></div>
    <div class="trr" style="left:8px;top:845px;border-left-color:#c5c5c5"></div>
    <div class="a nw" style="left:21px;top:842px;font-size:11.5px;font-weight:bold;color:#d4d4d4">大纲</div>
        <div class="trr" style="left:8px;top:867px;border-left-color:#c5c5c5"></div>
    <div class="a nw" style="left:21px;top:864px;font-size:11.5px;font-weight:bold;color:#d4d4d4">时间线</div>
  </div>
  <div id="ed">
    <!-- tabs row (local x = page - 714) -->
    <div class="a" style="left:0;top:0;width:950px;height:30px;background:#3a3a3a"></div>
    <div class="a nw" style="left:1px;top:8px;font-size:12.5px;color:#a8a8a8">enterExamine.wxss</div>
    <div class="a" style="left:135px;top:0;width:1px;height:30px;background:#2a2a2a"></div>
    <div class="a" style="left:414px;top:0;width:1px;height:30px;background:#2a2a2a"></div>
    <div class="a" style="left:552px;top:0;width:1px;height:30px;background:#2a2a2a"></div>
    <div class="a" style="left:705px;top:0;width:137px;height:30px;background:#2b2b2b"></div>
    <div class="a" style="left:841px;top:0;width:1px;height:30px;background:#2a2a2a"></div>
    <svg class="a" style="left:146px;top:8px" width="14" height="14"><path d="M1.3 1H12.8L11.6 11.3L6.2 13.3L1.6 11.6L1.9 9.2H4.3L4.2 10.2L6.3 10.9L9.2 10L9.5 7.6H2.5L2.8 5.3H9.8L10.1 3.4H1z" fill="#42a5f5"/></svg>
    <div class="a nw" style="left:168px;top:8px;font-size:12.5px;color:#a8a8a8">departmentCommunityProposed.wxss</div>
    <svg class="a" style="left:426px;top:8px" width="14" height="14"><path d="M1.3 1H12.8L11.6 11.3L6.2 13.3L1.6 11.6L1.9 9.2H4.3L4.2 10.2L6.3 10.9L9.2 10L9.5 7.6H2.5L2.8 5.3H9.8L10.1 3.4H1z" fill="#42a5f5"/></svg>
    <div class="a nw" style="left:447px;top:8px;font-size:12.5px;color:#a8a8a8">step-bar.wxss</div>
    <svg class="a" style="left:563px;top:8px" width="14" height="14"><path d="M1.3 1H12.8L11.6 11.3L6.2 13.3L1.6 11.6L1.9 9.2H4.3L4.2 10.2L6.3 10.9L9.2 10L9.5 7.6H2.5L2.8 5.3H9.8L10.1 3.4H1z" fill="#42a5f5"/></svg>
    <div class="a nw" style="left:585px;top:8px;font-size:12.5px;color:#a8a8a8">reportCase.wxss</div>
    <svg class="a" style="left:718px;top:9px" width="12" height="12"><rect width="12" height="12" fill="#f5c518"/><text x="11.3" y="11" text-anchor="end" font-family="Liberation Sans,sans-serif" font-size="7.5" font-weight="bold" fill="#333" letter-spacing="-0.4">JS</text></svg>
    <div class="a nw" style="left:738px;top:8px;font-size:12.5px;color:#f2f2f2">reportCase.js</div>
    <svg class="a" style="left:820px;top:10px" width="11" height="11"><path d="M0.5 0.5L10.5 10.5M10.5 0.5L0.5 10.5" stroke="#f0f0f0" stroke-width="1.4"/></svg>
    <svg class="a" style="left:852px;top:7px" width="16" height="16"><circle cx="3.5" cy="3" r="2" fill="none" stroke="#c8c8c8" stroke-width="1.1"/><circle cx="12.5" cy="13" r="2" fill="none" stroke="#c8c8c8" stroke-width="1.1"/><path d="M3.5 5V13H9M12.5 11V3H7M9 11L7 13L9 15M7 1L9 3L7 5" fill="none" stroke="#c8c8c8" stroke-width="1.1"/></svg>
    <svg class="a" style="left:884px;top:8px" width="14" height="14"><rect x="0.5" y="0.5" width="13" height="13" fill="none" stroke="#c8c8c8" stroke-width="1.1"/><line x1="7" y1="0.5" x2="7" y2="13.5" stroke="#c8c8c8" stroke-width="1.1"/></svg>
    <div class="a nw" style="left:915px;top:4px;font-size:14px;color:#c8c8c8;letter-spacing:1px">···</div>
    <div class="a" style="left:935px;top:52px;width:1px;height:165px;background:#464646"></div>
    <!-- breadcrumb -->
    <svg class="a" style="left:9px;top:35px" width="15" height="11"><path d="M0 0.8H1.5M0 3.8H1.5M0 6.8H1.5M0 9.8H1.5M3.5 0.8H15M3.5 3.8H15M3.5 6.8H15M3.5 9.8H15" stroke="#aaa" stroke-width="1"/></svg>
    <svg class="a" style="left:40px;top:34px" width="11" height="14"><path d="M0.6 0.6H10.4V13L5.5 8.8L0.6 13z" fill="none" stroke="#aaa" stroke-width="1.2"/></svg>
    <svg class="a" style="left:69px;top:35px" width="14" height="12"><path d="M13 6H1M6 1L1 6L6 11" fill="none" stroke="#b0b0b0" stroke-width="1.2"/></svg>
    <svg class="a" style="left:97px;top:35px" width="14" height="12"><path d="M1 6H13M8 1L13 6L8 11" fill="none" stroke="#666" stroke-width="1.2"/></svg>
    <div class="a nw" style="left:127px;top:34.5px;font-size:12.5px;color:#9a9a9a">pages</div><svg class="a" style="left:167px;top:36px" width="6" height="11"><path d="M0.6 0.6L5.2 5.5L0.6 10.4" fill="none" stroke="#9a9a9a" stroke-width="1.1"/></svg><div class="a nw" style="left:178px;top:34.5px;font-size:12.5px;color:#9a9a9a">reportCase</div><svg class="a" style="left:246px;top:36px" width="6" height="11"><path d="M0.6 0.6L5.2 5.5L0.6 10.4" fill="none" stroke="#9a9a9a" stroke-width="1.1"/></svg>
    <svg class="a" style="left:258px;top:35px" width="12" height="12"><rect width="12" height="12" fill="#f5c518"/><text x="11.3" y="11" text-anchor="end" font-family="Liberation Sans,sans-serif" font-size="7.5" font-weight="bold" fill="#333" letter-spacing="-0.4">JS</text></svg>
    <div class="a nw" style="left:278px;top:34.5px;font-size:12.5px;color:#d0d0d0">reportCase.js</div><svg class="a" style="left:358px;top:36px" width="6" height="11"><path d="M0.6 0.6L5.2 5.5L0.6 10.4" fill="none" stroke="#9a9a9a" stroke-width="1.1"/></svg><div class="a nw" style="left:368px;top:34.5px;font-size:12.5px;color:#9a9a9a">...</div>
    <!-- code -->
    <div class="code" style="top:53px"><span class="ln">1</span><span style="color:#58b85c">// packageE/reportCase/reportCase.js</span></div>
    <div class="code" style="top:85px"><span class="ln">2</span><span style="color:#f0d35a">const</span> <span style="color:#5db4f4">{</span></div>
    <svg class="a" style="left:44px;top:90px" width="11" height="6"><path d="M0.5 0.5L5.5 5L10.5 0.5" fill="none" stroke="#c8c8c8" stroke-width="1.1"/></svg>
    <div class="code" style="top:117px"><span class="ln">3</span>  <span style="color:#e6e6e6">request,</span></div>
    <div class="code" style="top:149px"><span class="ln">4</span>  <span style="color:#e6e6e6">uploadUrl</span></div>
    <div class="code" style="top:181px"><span class="ln">5</span><span style="color:#5db4f4">}</span> <span style="color:#e6e6e6">=</span> <span style="color:#f2a35a">require</span><span style="color:#e6e6e6">(</span><span style="color:#ef6b4f">'../../utils/request'</span><span style="color:#e6e6e6">)</span></div>
    <div class="a" style="left:63px;top:116px;width:1px;height:63px;background:#464646"></div>
    <div class="a nw" style="left:95px;top:204px;font-size:10px;color:#aaa;letter-spacing:0.5px">···</div>
    <!-- debug panel -->
    <div class="a" style="left:0;top:217px;width:950px;height:1px;background:#484848"></div>
    <div class="a" style="left:0;top:218px;width:950px;height:29px;background:#333"></div>
    <div class="ptab" style="left:21px;color:#9a9a9a">构建</div>
    <div class="ptab" style="left:63px;color:#f4f4f4">调试器</div>
    <div class="a" style="left:104px;top:224px;width:18px;height:18px;border-radius:50%;background:#4a4a4a;color:#f0f0f0;font-size:11px;text-align:center;line-height:18px">3</div>
    <div class="ptab" style="left:142px;color:#9a9a9a">问题</div>
    <div class="ptab" style="left:184px;color:#9a9a9a">输出</div>
    <div class="ptab" style="left:226px;color:#9a9a9a">终端</div>
    <div class="ptab" style="left:268px;color:#9a9a9a">代码质量</div>
    <div class="a" style="left:63px;top:245px;width:33px;height:2px;background:#f0f0f0"></div>
    <svg class="a" style="left:886px;top:231px" width="12" height="7"><path d="M0.5 6.5L6 1L11.5 6.5" fill="none" stroke="#d0d0d0" stroke-width="1.2"/></svg>
    <svg class="a" style="left:918px;top:229px" width="11" height="11"><path d="M0.5 0.5L10.5 10.5M10.5 0.5L0.5 10.5" stroke="#d8d8d8" stroke-width="1.3"/></svg>
    <!-- devtools tabs -->
    <div class="a" style="left:0;top:247px;width:950px;height:27px;background:#28292c;border-bottom:1px solid #3f4044"></div>
    <svg class="a" style="left:11px;top:254px" width="14" height="14"><path d="M5 12.5H0.6V0.6H12.4V5" fill="none" stroke="#9aa0a6" stroke-width="1.1"/><path d="M6 6L13.5 9L10.5 10L13.5 13L12.5 14L9.5 11L8.5 14z" fill="#9aa0a6"/></svg>
    <div class="a" style="left:35px;top:252px;width:1px;height:16px;background:#3f4044"></div>
    <div class="a" style="left:229px;top:247px;width:66px;height:26px;background:#000"></div>
    <div class="dtab" style="left:54px">Wxml</div>
    <div class="dtab" style="left:107px">Network</div>
    <div class="dtab" style="left:176px">Storage</div>
    <div class="dtab" style="left:240px;color:#f0f0f0">Console</div>
    <div class="dtab" style="left:306px">Sources</div>
    <div class="dtab" style="left:371px">Performance</div>
    <div class="dtab" style="left:461px">AppData</div>
    <div class="dtab" style="left:531px">Security</div>
    <div class="dtab" style="left:606px">Sensor</div>
    <div class="dtab" style="left:665px">Mock</div>
    <div class="dtab" style="left:718px">Audits</div>
    <svg class="a" style="left:773px;top:256px" width="10" height="9"><path d="M0.8 0.8L4.5 4.5L0.8 8.2M5 0.8L8.7 4.5L5 8.2" fill="none" stroke="#bdbdbd" stroke-width="1.2"/></svg>
    <svg class="a" style="left:827px;top:255px" width="11" height="10"><path d="M5.5 0.5L10.7 9.5H0.3z" fill="#f2b81c"/><rect x="5" y="3.5" width="1" height="3.3" fill="#28292c"/><rect x="5" y="7.5" width="1" height="1" fill="#28292c"/></svg>
    <div class="a nw" style="left:841px;top:254px;font-size:12px;color:#e0e0e0">3</div>
    <div class="a" style="left:858px;top:252px;width:1px;height:16px;background:#3f4044"></div>
    <svg class="a" style="left:869px;top:252px" width="16" height="16"><path fill="#9aa0a6" fill-rule="evenodd" d="M13.45 6.69 L15.52 6.93 L15.52 9.07 L13.45 9.31 L12.77 10.93 L14.08 12.56 L12.56 14.08 L10.93 12.77 L9.31 13.45 L9.07 15.52 L6.93 15.52 L6.69 13.45 L5.07 12.77 L3.44 14.08 L1.92 12.56 L3.23 10.93 L2.55 9.31 L0.48 9.07 L0.48 6.93 L2.55 6.69 L3.23 5.07 L1.92 3.44 L3.44 1.92 L5.07 3.23 L6.69 2.55 L6.93 0.48 L9.07 0.48 L9.31 2.55 L10.93 3.23 L12.56 1.92 L14.08 3.44 L12.77 5.07z M8 5.2 A2.8 2.8 0 1 0 8 10.8 A2.8 2.8 0 1 0 8 5.2z"/></svg>
    <svg class="a" style="left:903px;top:253px" width="4" height="15"><circle cx="2" cy="2" r="1.5" fill="#9aa0a6"/><circle cx="2" cy="7.5" r="1.5" fill="#9aa0a6"/><circle cx="2" cy="13" r="1.5" fill="#9aa0a6"/></svg>
    <svg class="a" style="left:924px;top:254px" width="18" height="14"><rect x="4.5" y="0.6" width="12.8" height="9" fill="none" stroke="#9aa0a6" stroke-width="1.2"/><path d="M4.5 3.5H0.6V13.4H13.5V9.6" fill="none" stroke="#9aa0a6" stroke-width="1.2"/><rect x="4.5" y="0.6" width="12.8" height="2.5" fill="#9aa0a6"/></svg>
    <!-- console toolbar -->
    <div class="a" style="left:0;top:274px;width:950px;height:27px;background:#28292c;border-bottom:1px solid #494c50"></div>
    <svg class="a" style="left:9px;top:281px" width="15" height="13"><rect x="0.6" y="0.6" width="13.8" height="11.8" fill="none" stroke="#9aa0a6" stroke-width="1.1"/><line x1="4" y1="0.6" x2="4" y2="12.4" stroke="#9aa0a6" stroke-width="1.1"/><path d="M7 3.5L11 6.5L7 9.5z" fill="#9aa0a6"/></svg>
    <svg class="a" style="left:39px;top:281px" width="13" height="13"><circle cx="6.5" cy="6.5" r="5.6" fill="none" stroke="#9aa0a6" stroke-width="1.5"/><path d="M2.5 2.5L10.5 10.5" stroke="#9aa0a6" stroke-width="1.5"/></svg>
    <div class="a" style="left:63px;top:280px;width:1px;height:16px;background:#3f4044"></div>
    <div class="a nw" style="left:73px;top:281px;font-size:12px;color:#e0e0e0">top</div>
    <div class="tri" style="left:194px;top:286px;border-top-color:#9aa0a6;border-left-width:4px;border-right-width:4px;border-top-width:6px"></div>
    <div class="a" style="left:210px;top:280px;width:1px;height:16px;background:#3f4044"></div>
    <svg class="a" style="left:221px;top:283px" width="16" height="10"><path d="M0.5 5C3 0.5 13 0.5 15.5 5C13 9.5 3 9.5 0.5 5z" fill="#9aa0a6"/><circle cx="8" cy="5" r="2.8" fill="#28292c"/><circle cx="8" cy="5" r="1.6" fill="#9aa0a6"/></svg>
    <div class="a" style="left:247px;top:280px;width:1px;height:16px;background:#3f4044"></div>
    <div class="a" style="left:254px;top:277px;width:197px;height:21px;border:1px solid #5f6368;background:#202124"></div>
    <div class="a nw" style="left:259px;top:281px;font-size:12px;color:#c8c8c8">Filter</div>
    <div class="a nw" style="left:459px;top:281px;font-size:12px;color:#e0e0e0">Default levels</div>
    <div class="tri" style="left:535px;top:286px;border-top-color:#9aa0a6;border-left-width:3.5px;border-right-width:3.5px;border-top-width:6px"></div>
    <div class="a" style="left:857px;top:279px;width:1px;height:18px;background:#3f4044"></div>
    <div class="a nw" style="left:867px;top:281px;font-size:12px;color:#9aa0a6">2 hidden</div>
    <svg class="a" style="left:925px;top:280px" width="16" height="16"><path fill="#9aa0a6" fill-rule="evenodd" d="M13.45 6.69 L15.52 6.93 L15.52 9.07 L13.45 9.31 L12.77 10.93 L14.08 12.56 L12.56 14.08 L10.93 12.77 L9.31 13.45 L9.07 15.52 L6.93 15.52 L6.69 13.45 L5.07 12.77 L3.44 14.08 L1.92 12.56 L3.23 10.93 L2.55 9.31 L0.48 9.07 L0.48 6.93 L2.55 6.69 L3.23 5.07 L1.92 3.44 L3.44 1.92 L5.07 3.23 L6.69 2.55 L6.93 0.48 L9.07 0.48 L9.31 2.55 L10.93 3.23 L12.56 1.92 L14.08 3.44 L12.77 5.07z M8 5.2 A2.8 2.8 0 1 0 8 10.8 A2.8 2.8 0 1 0 8 5.2z"/></svg>
    <!-- console messages -->
    <div class="a" style="left:0;top:301px;width:950px;height:575px;background:#242424"></div>
    <div class="crow" style="top:301px;height:22px"><div class="ct" style="left:25px;top:5.6px"><span class="ctri"></span><i class="ob">{type: <span class="st">"change"</span>, timeStamp: <span class="nu">162301</span>, target: {…}, currentTarget: {…}, mark: {…}, …}</i> "<span class="st">e</span>" <span class="ctri"></span><i class="ob">(3) [{…}, {…}, {…}]</i></div><div class="csrc" style="top:5.6px">index.js? [sm]:48</div></div>
    <div class="crow cw" style="top:323px;height:21px"><svg class="a" style="left:8px;top:5px" width="11" height="10"><path d="M5.5 0.3L10.8 9.7H0.2z" fill="#f2c21b"/><rect x="5" y="3.3" width="1.1" height="3.6" fill="#332b00"/><rect x="5" y="7.6" width="1.1" height="1.1" fill="#332b00"/></svg><div class="ct" style="left:25px;top:3.7px">[<span class="cj">自动热重载</span>] <span class="cj">已开启代码文件保存后自动热重载</span></div></div>
    <div class="crow" style="top:344px;height:19px"><div class="ct" style="left:25px;top:3.6px"><span class="cj">页面卸载<span class="cp">，</span>取消请求<span class="cp">：</span></span> <span style="margin-left:4px">pages/reportCase/reportCase</span></div><div class="csrc" style="top:3.6px">app.js? [sm]:132</div></div>
    <div class="crow" style="top:363px;height:20px"><div class="ct" style="left:25px;top:4.6px"><span class="cj">取消页面</span> pages/reportCase/reportCase <span class="cj">的</span> 1 <span class="cj">个请求</span></div><div class="csrc" style="top:4.6px">request.js? [sm]:43</div></div>
    <div class="crow" style="top:383px;height:20px"><div class="ct" style="left:25px;top:4.6px">22</div><div class="csrc" style="top:4.6px">index.js? [sm]:52</div></div>
    <div class="crow" style="top:403px;height:20px"><div class="ct" style="left:25px;top:4.6px"><span class="cj">社区</span>/<span class="cj">综治中心开启关闭</span></div><div class="csrc" style="top:4.6px">mine.js? [sm]:815</div></div>
    <div class="crow" style="top:423px;height:20px"><div class="ct" style="left:25px;top:4.6px"><span style="color:#8d8d8d">undefined</span> "<span class="st">hasPermission</span>"</div><div class="csrc" style="top:4.6px">mine.js? [sm]:820</div></div>
    <div class="crow" style="top:443px;height:22px"><div class="ct" style="left:25px;top:5.6px"><span class="ctri"></span><i class="ob">{type: <span class="st">"change"</span>, timeStamp: <span class="nu">166603</span>, target: {…}, currentTarget: {…}, mark: {…}, …}</i> "<span class="st">e</span>" <span class="ctri"></span><i class="ob">(3) [{…}, {…}, {…}]</i></div><div class="csrc" style="top:5.6px">index.js? [sm]:48</div></div>
    <div class="crow" style="top:465px;height:20px"><div class="ct" style="left:25px;top:4.6px"><span class="nu">3 false</span></div><div class="csrc" style="top:4.6px">index.js? [sm]:53</div></div>
    <div class="crow" style="top:485px;height:20px"><div class="ct" style="left:25px;top:4.6px"><span class="cj">准备跳转<span class="cp">，</span>路径<span class="cp">：</span></span> /pages/reportCase/reportCase</div><div class="csrc" style="top:4.6px">index.js? [sm]:57</div></div>
    <div class="crow cw" style="top:505px;height:21px"><svg class="a" style="left:8px;top:5px" width="11" height="10"><path d="M5.5 0.3L10.8 9.7H0.2z" fill="#f2c21b"/><rect x="5" y="3.3" width="1.1" height="3.6" fill="#332b00"/><rect x="5" y="7.6" width="1.1" height="1.1" fill="#332b00"/></svg><div class="ct" style="left:25px;top:3.7px">[<span class="cj">自动热重载</span>] <span class="cj">已开启代码文件保存后自动热重载</span></div></div>
    <div class="crow" style="top:526px;height:19px"><div class="ct" style="left:25px;top:3.6px">22</div><div class="csrc" style="top:3.6px">index.js? [sm]:114</div></div>
    <div class="crow" style="top:545px;height:20px"><div class="ct" style="left:25px;top:4.6px">wxLogin <span class="nu">1</span></div><div class="csrc" style="top:4.6px">reportCase.js? [sm]:894</div></div>
    <div class="crow" style="top:565px;height:22px"><div class="ct" style="left:25px;top:5.6px">info <span class="ctri"></span><i class="ob">{user: {…}, dept: {…}}</i></div><div class="csrc" style="top:5.6px">reportCase.js? [sm]:461</div></div>
    <div class="crow" style="top:587px;height:22px"><div class="ct" style="left:25px;top:5.6px"><span class="cj">跳转成功</span> <span class="ctri"></span><i class="ob">{errMsg: <span class="st">"reLaunch:ok"</span>}</i></div><div class="csrc" style="top:5.6px">index.js? [sm]:61</div></div>
    <div class="crow" style="top:609px;height:20px"><div class="tri" style="left:12px;top:7px;border-top-color:#9aa0a6;border-left-width:3.5px;border-right-width:3.5px;border-top-width:7px"></div><div class="ct" style="left:25px;top:4.6px"><b>Mon Nov 17 2025 10:07:30 GMT+0800 <span class="cj">(中国标准时间) 数据传输长度过长</span></b></div></div>
    <div class="crow cw" style="top:629px;height:20px"><div class="a" style="left:14px;top:0;width:1px;height:19px;background:#8a8a7a"></div><div class="a" style="left:14px;top:18px;width:4px;height:1px;background:#8a8a7a"></div><svg class="a" style="left:22px;top:5px" width="11" height="10"><path d="M5.5 0.3L10.8 9.7H0.2z" fill="#f2c21b"/><rect x="5" y="3.3" width="1.1" height="3.6" fill="#332b00"/><rect x="5" y="7.6" width="1.1" height="1.1" fill="#332b00"/></svg><div class="ct" style="left:41px;top:3.7px"><span class="ctri"></span>setData <span class="cj">数据传输长度为</span> 3446 KB<span class="cj">，存在有性能问题！</span></div></div>
    <div class="crow" style="top:649px;height:19px"><div class="ct" style="left:25px;top:5.2px"><span class="cj">自动缩放至围栏区域完成</span></div><div class="csrc" style="top:5.2px">reportCase.js? [sm]:1168</div></div>
    <svg class="a" style="left:12px;top:674px" width="7" height="10"><path d="M1 1L5.5 5L1 9" fill="none" stroke="#3c8cf0" stroke-width="1.6"/></svg><div class="a" style="left:25px;top:672px;width:1px;height:14px;background:#ddd"></div>
  </div>
  <div id="status">
    <div class="a nw" style="left:8px;top:9px;font-size:12px;color:#9a9a9a">页面路径</div>
    <div class="tri" style="left:61px;top:14px;border-top-color:#9a9a9a"></div>
    <div class="a" style="left:75px;top:8px;width:1px;height:12px;background:#666"></div>
    <div class="a nw" style="left:83px;top:9px;font-size:12px;color:#9a9a9a">pages/reportCase/reportCase</div>
    <div class="a" style="left:249px;top:10px;width:10px;height:10px;border:1px solid #9a9a9a"></div>
    <svg class="a" style="left:362px;top:8px" width="16" height="14"><ellipse cx="8" cy="9" rx="4" ry="5" fill="none" stroke="#9a9a9a" stroke-width="1.1"/><path d="M3 5l2 1.5M13 5l-2 1.5M2 9h2M14 9h-2" stroke="#9a9a9a" stroke-width="1.1"/></svg>
    <svg class="a" style="left:395px;top:9px" width="18" height="12"><path d="M1 6C3.5 1 14.5 1 17 6C14.5 11 3.5 11 1 6z" fill="none" stroke="#9a9a9a" stroke-width="1.1"/><circle cx="9" cy="6" r="2.2" fill="none" stroke="#9a9a9a" stroke-width="1.1"/></svg>
    <div class="a nw" style="left:432px;top:5px;font-size:12px;color:#9a9a9a">···</div>
    <div class="a" style="left:451px;top:0;width:1px;height:16px;background:#2e2e2e"></div>
    <svg class="a" style="left:469px;top:8px" width="14" height="12"><circle cx="3" cy="3" r="2" fill="none" stroke="#9a9a9a" stroke-width="1.1"/><path d="M3 5V12M3 9Q9 9 9 5" fill="none" stroke="#9a9a9a" stroke-width="1.1"/><circle cx="9" cy="3" r="2" fill="none" stroke="#9a9a9a" stroke-width="1.1"/></svg>
    <div class="a nw" style="left:485px;top:9px;font-size:12px;color:#9a9a9a">dev_changhuaijiedao</div>
    <svg class="a" style="left:610px;top:9px" width="14" height="12"><path d="M2 6A5 5 0 0 1 11 3.5M12 6A5 5 0 0 1 3 8.5" fill="none" stroke="#9a9a9a" stroke-width="1.1"/></svg>
    <svg class="a" style="left:638px;top:9px" width="12" height="12"><circle cx="6" cy="6" r="5.3" fill="none" stroke="#9a9a9a" stroke-width="1.1"/><path d="M3.5 3.5L8.5 8.5M8.5 3.5L3.5 8.5" stroke="#9a9a9a" stroke-width="1"/></svg>
    <div class="a nw" style="left:653px;top:9px;font-size:12px;color:#9a9a9a">0</div>
    <svg class="a" style="left:664px;top:8px" width="12" height="12"><path d="M6 0.8L11.3 10.5H0.7z" fill="none" stroke="#9a9a9a" stroke-width="1.1"/></svg>
    <div class="a nw" style="left:679px;top:9px;font-size:12px;color:#9a9a9a">0</div>
    <div class="a nw" style="left:1385px;top:9px;font-size:12px;color:#9a9a9a;word-spacing:0px">行 1，列 1</div>
    <div class="a nw" style="left:1456px;top:9px;font-size:12px;color:#9a9a9a">空格: 2</div>
    <div class="a nw" style="left:1508px;top:9px;font-size:12px;color:#9a9a9a">UTF-8</div>
    <div class="a nw" style="left:1556px;top:9px;font-size:12px;color:#9a9a9a">CRLF</div>
    <div class="a nw" style="left:1599px;top:9px;font-size:12px;color:#9a9a9a">JavaScript</div>
  </div>
</div>
<!-- left browser strip -->
<div class="a" style="left:0;top:0;width:4px;height:981px;background:#eeeeee"></div>
<div class="a" style="left:0;top:95px;width:4px;height:70px;background:#4a90e2"></div>
<div class="a" style="left:0;top:165px;width:4px;height:65px;background:#dfe3dc"></div>
<div class="a" style="left:0;top:20px;width:3px;height:10px;background:#777"></div>
<div class="a" style="left:0;top:56px;width:3px;height:10px;background:#777"></div>
<div class="a" style="left:0;top:482px;width:2px;height:3px;background:#e03040"></div>
<div class="a" style="left:0;top:552px;width:2px;height:3px;background:#e03040"></div>
<div class="a" style="left:0;top:632px;width:2px;height:3px;background:#e03040"></div>
<!-- right browser strip -->
<div class="a" style="left:1664px;top:0;width:56px;height:981px;background:#ececec"></div>
<div class="a" style="left:1664px;top:0;width:56px;height:9px;background:#e3e3e3"></div>
<div class="a" style="left:1664px;top:9px;width:56px;height:69px;background:#f7f7f7"></div>
<div class="a" style="left:1664px;top:78px;width:25px;height:493px;background:#fff;border-radius:0 0 5px 0"></div>
<div class="a" style="left:1664px;top:581px;width:25px;height:264px;background:#fff;border-radius:0 5px 5px 0"></div>
<div class="a" style="left:1664px;top:620px;width:15px;height:1px;background:#ddd"></div>
<div class="a" style="left:1664px;top:973px;width:56px;height:8px;background:#fff"></div>
<div class="a" style="left:1664px;top:0;width:8px;height:981px;background:linear-gradient(90deg,rgba(0,0,0,.12),rgba(0,0,0,0))"></div>
<svg class="a" style="left:1663px;top:20px" width="14" height="16"><path d="M0.5 8L4 1.5L7.5 7" fill="none" stroke="#222" stroke-width="1.3"/><path d="M6 7H14M7 10.5H14M6 14H14" stroke="#222" stroke-width="1.3"/><path d="M1 13L3 11.5" stroke="#222" stroke-width="1"/></svg>
<div class="a" style="left:1692px;top:18px;width:22px;height:22px;border-radius:50%;background:#d6d6d6;overflow:hidden"><div class="a" style="left:7px;top:4px;width:8px;height:8px;border-radius:50%;background:#8d8d8d"></div><div class="a" style="left:3px;top:14px;width:16px;height:12px;border-radius:50%;background:#8d8d8d"></div></div>
<div class="a" style="left:1709px;top:18px;width:6px;height:6px;border-radius:50%;background:#e8141c"></div>
<div class="a" style="left:1700px;top:516px;width:22px;height:58px;border-radius:3px 0 0 3px;background:#737373"></div>
<svg class="a" style="left:1712px;top:538px" width="8" height="14"><path d="M1 1L7 7L1 13" fill="none" stroke="#fff" stroke-width="2.2"/></svg>
<!-- IME bar -->
<div class="a" style="left:1622px;top:468px;width:100px;height:26px;background:#fff;border:1px solid #b8d0ee;border-right:none"></div>
<svg class="a" style="left:1604px;top:462px" width="38" height="36"><rect x="5" y="5" width="28" height="26" rx="4" fill="#f25a1f" transform="rotate(-16 19 18)"/><path d="M27 11.5Q20 8 13.5 10.5Q9 13 14 16.5Q22 17.5 22 20.5Q20 24.5 11 22.5" fill="none" stroke="#fff" stroke-width="3.6" stroke-linecap="round"/></svg>
<div class="a nw" style="left:1645px;top:472px;font-size:14px;font-weight:bold;color:#1467d6">中</div>
<div class="a nw" style="left:1670px;top:473px;font-size:14px;font-weight:bold;color:#1467d6">°,</div>
<svg class="a" style="left:1693px;top:472px" width="13" height="18"><rect x="3.5" y="0.5" width="6" height="11" rx="3" fill="#1467d6"/><path d="M1.2 7.5Q1.2 13 6.5 13Q11.8 13 11.8 7.5M6.5 13V16.5M4 16.5H9" fill="none" stroke="#1467d6" stroke-width="1.5"/></svg>
<div class="a" style="left:1716px;top:475px;width:6px;height:12px;border:2px solid #1467d6;border-right:none;border-radius:2px 0 0 2px"></div>
<!-- red arrow annotation -->
<svg class="a" style="left:0;top:0" width="1720" height="981"><path d="M1311 808L1452 672L1455.5 675L1313 808z" fill="#f04848"/><path d="M1472 650.5L1445 663.5L1461 677z" fill="#f04848"/></svg>
</body></html>
